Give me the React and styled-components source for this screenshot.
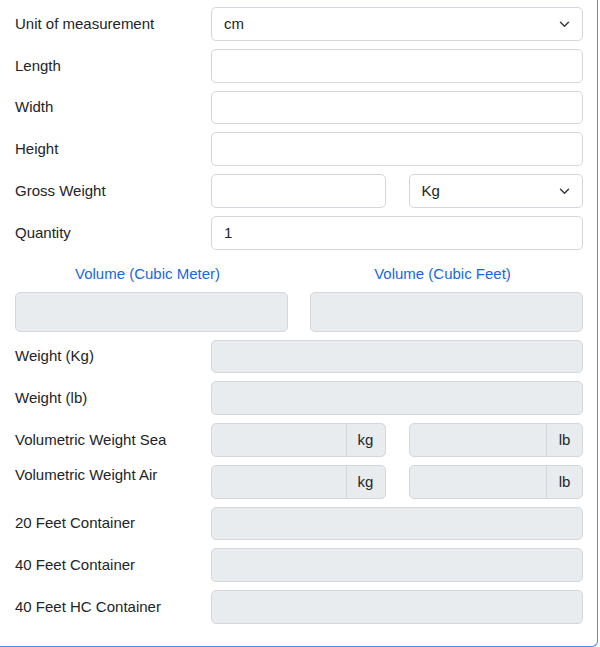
import styled, { createGlobalStyle } from "styled-components";

const GlobalStyle = createGlobalStyle`
  body {
    margin: 0;
    background: #fff;
    font-family: "Liberation Sans", Arial, sans-serif;
    color: #212529;
  }
  * { box-sizing: border-box; }
`;

const Card = styled.div`
  width: 598px;
  padding: 7px 14px 22px 15px;
  border-right: 1px solid #4a8fe7;
  border-bottom: 1px solid #4a8fe7;
  border-bottom-right-radius: 6px;
  background: #fff;
`;

const Form = styled.form`
  display: flex;
  flex-direction: column;
  gap: 8px;
`;

const Row = styled.div`
  display: grid;
  grid-template-columns: 196px 1fr;
  align-items: ${({ $top }) => ($top ? "start" : "center")};
`;

const Label = styled.label`
  font-size: 15px;
  line-height: 20px;
`;

const Field = styled.input`
  width: 100%;
  height: ${({ $tall }) => ($tall ? "40px" : "33.75px")};
  padding: 0 12px;
  border: 1px solid #d4d7db;
  border-radius: 5px;
  font: inherit;
  font-size: 15px;
  color: #212529;
  background: ${({ disabled }) => (disabled ? "#e9ecef" : "#fff")};
  outline: none;
`;

const SelectWrap = styled.div`
  position: relative;
  width: 100%;
`;

const Select = styled.select`
  width: 100%;
  height: 33.75px;
  padding: 0 36px 0 12px;
  border: 1px solid #d4d7db;
  border-radius: 5px;
  font: inherit;
  font-size: 15px;
  color: #212529;
  background: #fff;
  appearance: none;
  -webkit-appearance: none;
  outline: none;
`;

const Chevron = styled.svg`
  position: absolute;
  right: 13px;
  top: 50%;
  margin-top: -3px;
  pointer-events: none;
`;

const Split = styled.div`
  display: grid;
  grid-template-columns: 1fr 1fr;
  column-gap: 23px;
`;

const Group = styled.div`
  display: flex;
  height: 33.75px;
  border: 1px solid #d4d7db;
  border-radius: 5px;
  background: #e9ecef;
  overflow: hidden;
`;

const GroupField = styled.input`
  flex: 1;
  min-width: 0;
  border: none;
  background: transparent;
  padding: 0 12px;
  font: inherit;
  font-size: 15px;
  outline: none;
`;

const Addon = styled.span`
  display: flex;
  align-items: center;
  justify-content: center;
  width: ${({ $w }) => $w}px;
  border-left: 1px solid #d4d7db;
  font-size: 15px;
  color: #212529;
`;

const Volume = styled.div`
  display: grid;
  grid-template-columns: 1fr 1fr;
  column-gap: 22px;
  row-gap: 8px;
`;

const Heading = styled.div`
  height: 26px;
  padding-top: 6px;
  padding-right: 8px;
  font-size: 15px;
  line-height: 20px;
  text-align: center;
  color: #1868dc;
`;

const ChevronIcon = () => (
  <Chevron width="11" height="7" viewBox="0 0 11 7">
    <path d="M1.5 1.2l4 4 4-4" fill="none" stroke="#343a40" strokeWidth="1.5" strokeLinecap="round" strokeLinejoin="round" />
  </Chevron>
);

const Dropdown = ({ value }) => (
  <SelectWrap>
    <Select defaultValue={value}>
      <option>{value}</option>
    </Select>
    <ChevronIcon />
  </SelectWrap>
);

const UnitGroup = ({ unit, w }) => (
  <Group>
    <GroupField disabled />
    <Addon $w={w}>{unit}</Addon>
  </Group>
);

export default function App() {
  return (
    <>
      <GlobalStyle />
      <Card>
        <Form>
          <Row>
            <Label>Unit of measurement</Label>
            <Dropdown value="cm" />
          </Row>
          <Row>
            <Label>Length</Label>
            <Field />
          </Row>
          <Row>
            <Label>Width</Label>
            <Field />
          </Row>
          <Row>
            <Label>Height</Label>
            <Field />
          </Row>
          <Row>
            <Label>Gross Weight</Label>
            <Split>
              <Field />
              <Dropdown value="Kg" />
            </Split>
          </Row>
          <Row>
            <Label>Quantity</Label>
            <Field defaultValue="1" />
          </Row>
          <Volume>
            <Heading>Volume (Cubic Meter)</Heading>
            <Heading>Volume (Cubic Feet)</Heading>
            <Field $tall disabled />
            <Field $tall disabled />
          </Volume>
          <Row>
            <Label>Weight (Kg)</Label>
            <Field disabled />
          </Row>
          <Row>
            <Label>Weight (lb)</Label>
            <Field disabled />
          </Row>
          <Row>
            <Label>Volumetric Weight Sea</Label>
            <Split>
              <UnitGroup unit="kg" w={39} />
              <UnitGroup unit="lb" w={36} />
            </Split>
          </Row>
          <Row $top>
            <Label>Volumetric Weight Air</Label>
            <Split>
              <UnitGroup unit="kg" w={39} />
              <UnitGroup unit="lb" w={36} />
            </Split>
          </Row>
          <Row>
            <Label>20 Feet Container</Label>
            <Field disabled />
          </Row>
          <Row>
            <Label>40 Feet Container</Label>
            <Field disabled />
          </Row>
          <Row>
            <Label>40 Feet HC Container</Label>
            <Field disabled />
          </Row>
        </Form>
      </Card>
    </>
  );
}
